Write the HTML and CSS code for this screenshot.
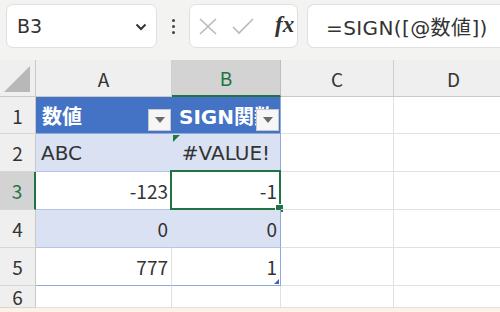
FILE: index.html
```html
<!DOCTYPE html>
<html lang="ja">
<head>
<meta charset="utf-8">
<link rel="stylesheet" href="styles.css">
</head>
<body>
<div class="app">
  <div class="toolbar">
    <div class="namebox">
      <span class="name">B3</span>
      <svg class="chev" width="12" height="8" viewBox="0 0 12 8"><path d="M1.5 1.5 L6 6 L10.5 1.5" fill="none" stroke="#333" stroke-width="2"/></svg>
    </div>
    <div class="dots"><span></span><span></span><span></span></div>
    <div class="fbtns">
      <svg width="20" height="17" viewBox="0 0 20 17"><path d="M2 1 L18 16 M18 1 L2 16" stroke="#b9b9b9" stroke-width="1.6" fill="none"/></svg>
      <svg width="22" height="17" viewBox="0 0 22 17"><path d="M1 9 L7 15 L21 1" stroke="#b9b9b9" stroke-width="1.6" fill="none"/></svg>
      <span class="fx">fx</span>
    </div>
    <div class="formula">=SIGN([@数値])</div>
  </div>
  <div class="sheet">
    <div class="corner"><svg width="26" height="26" viewBox="0 0 26 26"><path d="M26 0 L26 26 L0 26 Z" fill="#b8b8b8"/></svg></div>
    <div class="ch">A</div>
    <div class="ch sel">B</div>
    <div class="ch">C</div>
    <div class="ch">D</div>

    <div class="rh">1</div>
    <div class="c th">数値<span class="dd"><i></i></span></div>
    <div class="c th tb">SIGN関数<span class="dd"><i></i></span></div>
    <div class="c"></div>
    <div class="c"></div>

    <div class="rh">2</div>
    <div class="c band txt">ABC</div>
    <div class="c band tb center err txt">#VALUE!</div>
    <div class="c"></div>
    <div class="c"></div>

    <div class="rh rsel">3</div>
    <div class="c w num">-123</div>
    <div class="c w tb num active">-1</div>
    <div class="c"></div>
    <div class="c"></div>

    <div class="rh">4</div>
    <div class="c band num">0</div>
    <div class="c band tb num">0</div>
    <div class="c"></div>
    <div class="c"></div>

    <div class="rh">5</div>
    <div class="c w last num">777</div>
    <div class="c w tb last num resize">1</div>
    <div class="c"></div>
    <div class="c"></div>

    <div class="rh">6</div>
    <div class="c"></div>
    <div class="c"></div>
    <div class="c"></div>
    <div class="c"></div>
  </div>
  <div class="status"></div>
</div>
</body>
</html>
```
FILE: styles.css
```css
* { box-sizing: border-box; }
html, body { margin: 0; padding: 0; }
body {
  width: 500px;
  height: 312px;
  overflow: hidden;
  background: #f3f3f1;
  font-family: "Noto Sans CJK JP", "Noto Sans", sans-serif;
  color: #222;
}
.app { width: 500px; height: 312px; display: flex; flex-direction: column; overflow: hidden; }
.toolbar {
  height: 60px;
  flex: none;
  display: flex;
  align-items: flex-start;
  padding: 4px 0 0 6px;
  background: #f3f3f1;
}
.namebox {
  width: 151px;
  height: 44px;
  background: #fff;
  border: 1px solid #e0e0e0;
  border-radius: 7px;
  display: flex;
  align-items: center;
  padding: 0 9px 0 10px;
}
.name { font-family: "DejaVu Sans", "Noto Sans CJK JP", sans-serif; font-size: 19px; line-height: 1; color: #333; flex: 1; }
.chev { margin-top: 2px; }
.dots {
  width: 32px;
  height: 44px;
  display: flex;
  flex-direction: column;
  align-items: center;
  justify-content: center;
  gap: 3px;
}
.dots span { width: 3px; height: 3px; background: #444; border-radius: 50%; }
.fbtns {
  width: 109px;
  height: 44px;
  background: #fff;
  border: 1px solid #e0e0e0;
  border-radius: 7px;
  display: flex;
  align-items: center;
  padding: 0 0 0 8px;
  gap: 13px;
}
.fbtns svg:nth-child(2) { margin-left: 1px; }
.fx {
  font-family: "Liberation Serif", serif;
  font-style: italic;
  font-weight: bold;
  font-size: 23px;
  line-height: 1;
  color: #333;
  margin-left: 8px;
  margin-top: -3px;
}
.formula {
  margin-left: 9px;
  flex: 1;
  height: 44px;
  background: #fff;
  border: 1px solid #e0e0e0;
  border-right: none;
  border-radius: 7px 0 0 7px;
  display: flex;
  align-items: center;
  padding-left: 18px;
  font-family: "DejaVu Sans", "Noto Sans CJK JP", sans-serif;
  font-size: 20px;
  letter-spacing: 0.4px;
  color: #333;
  white-space: nowrap;
}
.sheet {
  flex: none;
  display: grid;
  grid-template-columns: 36px 136px 109px 113px 120px;
  grid-template-rows: 37px 37px 38px 38px 38px 38px 22px;
  background: #fff;
  width: 514px;
  height: 248px;
  overflow: hidden;
}
.status { flex: 1; background: #fcf3e4; }
.corner {
  background: #efefef;
  border-right: 1px solid #c9c9c9;
  border-bottom: 1px solid #c9c9c9;
  display: flex;
  align-items: flex-end;
  justify-content: flex-end;
  padding: 0 5px 4px 0;
}
.ch {
  background: #efefef;
  border-right: 1px solid #cfcfcf;
  border-bottom: 1px solid #c9c9c9;
  display: flex;
  align-items: center;
  justify-content: center;
  font-size: 19px;
  color: #333;
}
.ch.sel { background: #d3d3d3; color: #217346; border-bottom: 2px solid #217346; border-right-color: #bdbdbd; }
.rh {
  background: #efefef;
  border-right: 1px solid #c9c9c9;
  border-bottom: 1px solid #d6d6d6;
  display: flex;
  align-items: center;
  justify-content: center;
  font-size: 19px;
  color: #333;
}
.rh.rsel { background: #d3d3d3; color: #217346; border-right: 2px solid #217346; }
.c {
  position: relative;
  border-right: 1px solid #e1e1e1;
  border-bottom: 1px solid #e1e1e1;
  display: flex;
  align-items: center;
  padding: 0 5px;
  font-size: 19px;
  color: #333;
  white-space: nowrap;
  overflow: visible;
}
.txt { font-family: "DejaVu Sans", "Noto Sans CJK JP", sans-serif; font-size: 20px; }
.th {
  background: #4472c4;
  color: #fff;
  font-family: "DejaVu Sans", "Noto Sans CJK JP", sans-serif;
  font-size: 20px;
  font-weight: bold;
  border-right: none;
  border-bottom: 1px solid #8ea9db;
  overflow: hidden;
  padding-left: 6px;
}
.th.tb { border-right: 1px solid #8ea9db; padding-left: 7px; }
.dd {
  position: absolute;
  right: 1px;
  bottom: 2px;
  width: 23px;
  height: 22px;
  background: #f6f6f6;
  border: 1px solid #c8c8c8;
  display: flex;
  align-items: center;
  justify-content: center;
}
.dd i {
  width: 0; height: 0;
  border-left: 5px solid transparent;
  border-right: 5px solid transparent;
  border-top: 6px solid #6a6a6a;
}
.band { background: #d9e1f2; border-bottom: 1px solid #b4c6e7; border-right-color: #d9e1f2; }
.w { background: #fff; border-bottom: 1px solid #b4c6e7; }
.tb { border-right: 1px solid #8ea9db; }
.last { border-bottom: 1px solid #8ea9db; }
.num { justify-content: flex-end; padding-right: 3px; }
.center { justify-content: center; }
.err::before {
  content: "";
  position: absolute;
  left: 1px;
  top: 1px;
  width: 0; height: 0;
  border-top: 7px solid #1e7a3c;
  border-right: 7px solid transparent;
}
.active::before {
  content: "";
  position: absolute;
  left: -2px;
  top: -2px;
  right: -1px;
  bottom: -1px;
  border: 2px solid #217346;
}
.active::after {
  content: "";
  position: absolute;
  right: -4px;
  bottom: -4px;
  width: 7px;
  height: 7px;
  background: #217346;
  border: 1px solid #fff;
}
.resize::after {
  content: "";
  position: absolute;
  right: 1px;
  bottom: 1px;
  width: 0; height: 0;
  border-bottom: 5px solid #3f64c0;
  border-left: 5px solid transparent;
}
```
